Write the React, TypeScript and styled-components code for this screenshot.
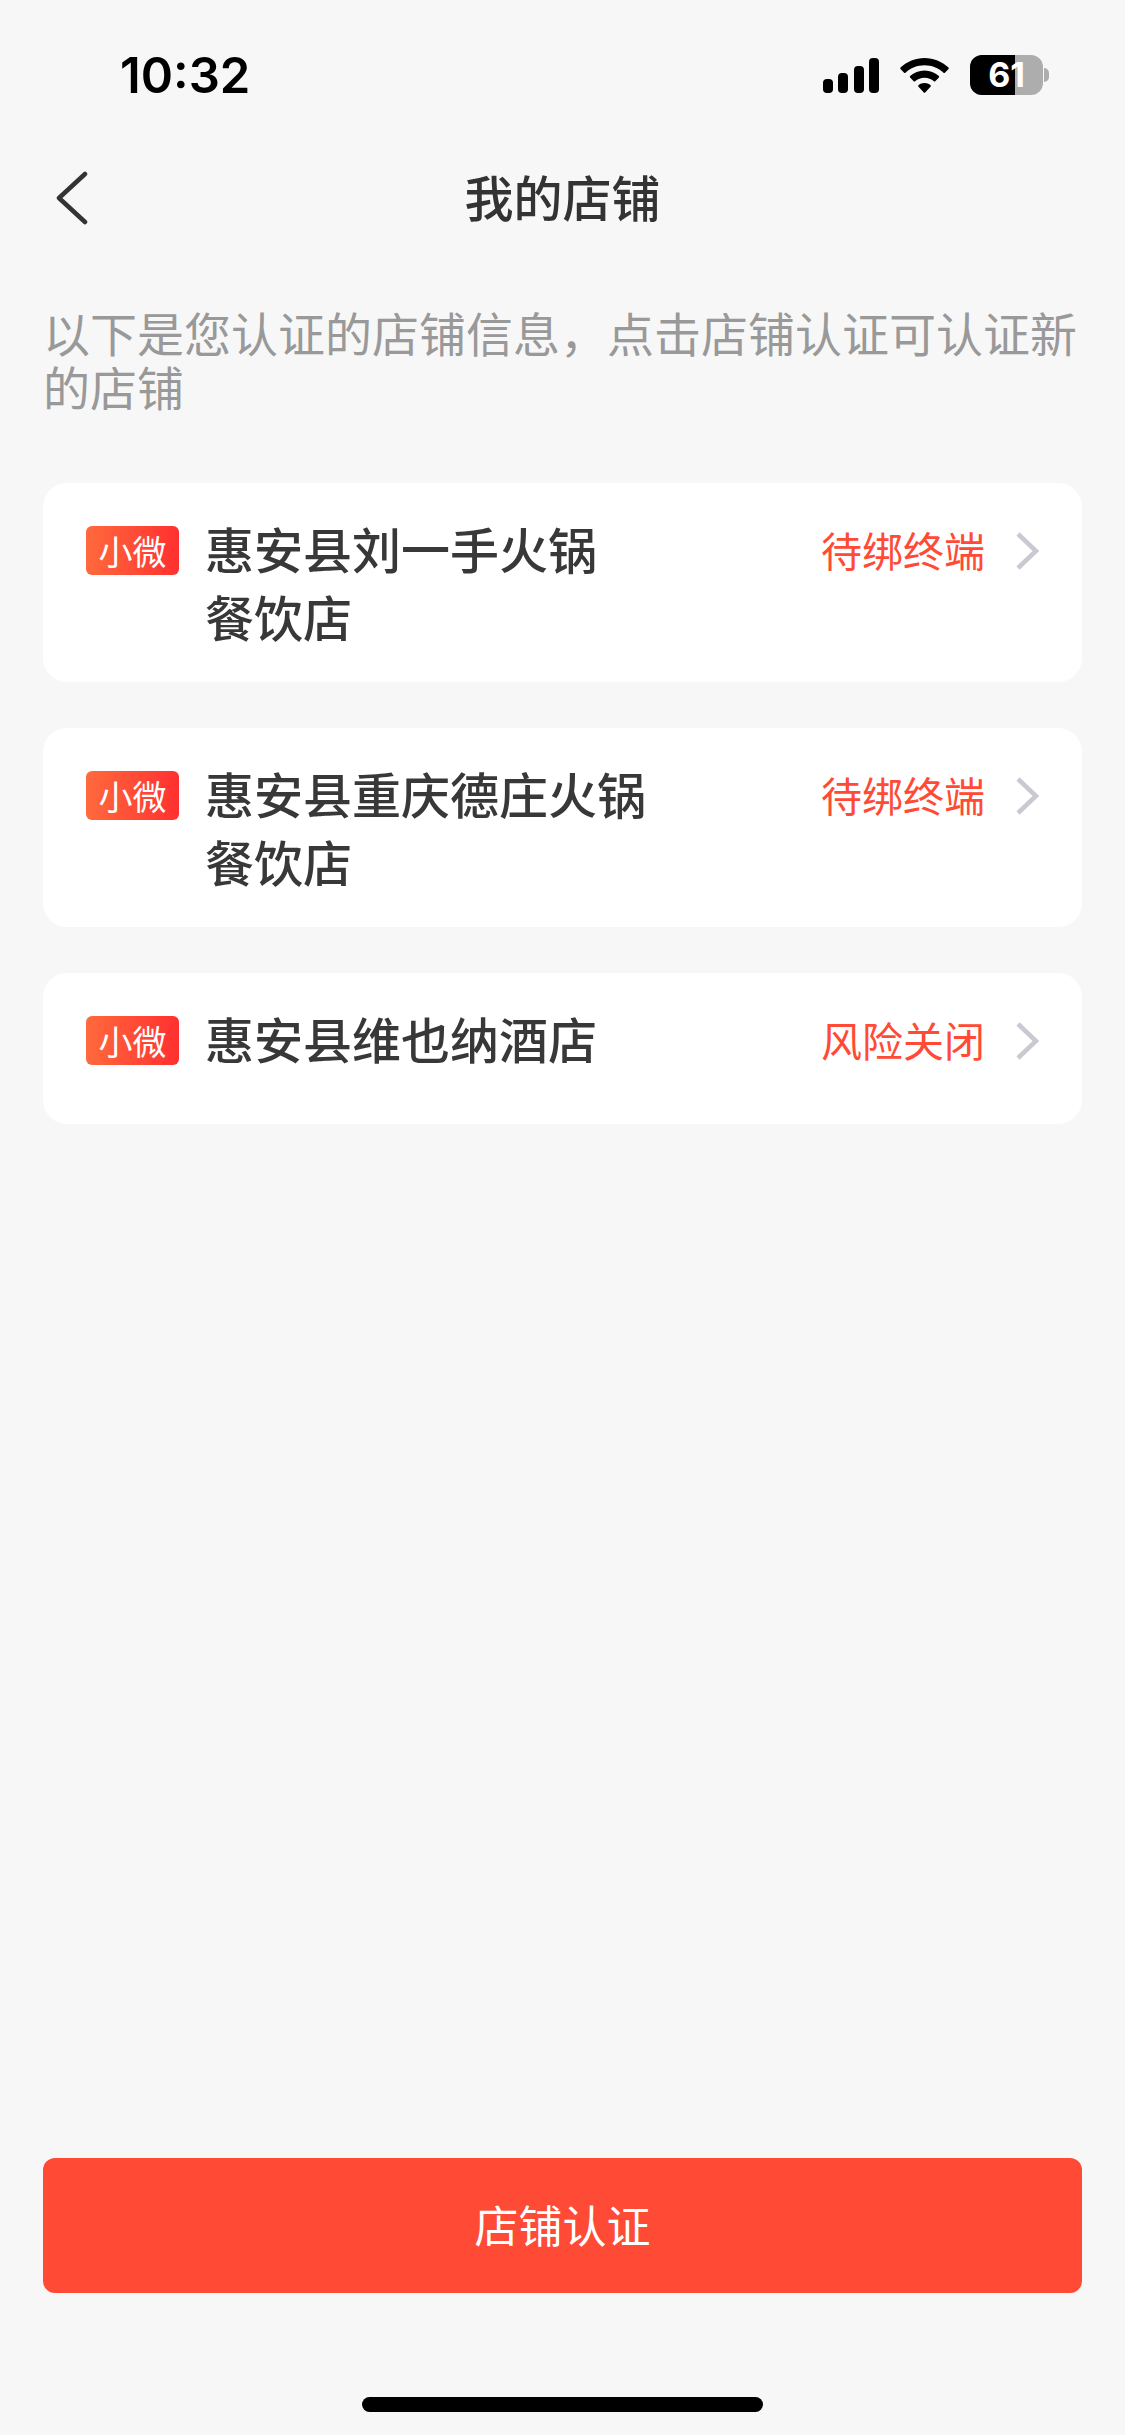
import * as React from 'react';
import styled, { createGlobalStyle } from 'styled-components';

const GlobalStyle = createGlobalStyle`
  html, body {
    margin: 0;
    padding: 0;
    background: #f7f7f7;
  }
  * {
    box-sizing: border-box;
  }
`;

const Page = styled.div`
  display: flex;
  flex-direction: column;
  height: 2435px;
  background: #f7f7f7;
  font-family: 'Noto Sans CJK SC', 'Noto Sans', sans-serif;
  color: #333;
`;

const StatusBar = styled.div`
  display: flex;
  align-items: center;
  justify-content: space-between;
  height: 150px;
  padding: 0 76px 0 120px;
`;

const Time = styled.span`
  font-family: Inter, sans-serif;
  font-size: 49px;
  font-weight: 600;
  color: #000;
`;

const StatusIcons = styled.div`
  display: flex;
  align-items: center;
  gap: 21px;
`;

const Battery = styled.div`
  position: relative;
  display: flex;
  align-items: center;
  justify-content: center;
  width: 73px;
  height: 40px;
  border-radius: 12px;
  background: #adadad;
  overflow: hidden;
`;

const BatteryFill = styled.div`
  position: absolute;
  left: 0;
  top: 0;
  bottom: 0;
  background: #000;
`;

const BatteryLabel = styled.span`
  position: relative;
  font-family: Inter, sans-serif;
  font-size: 34px;
  font-weight: 700;
  line-height: 1;
  color: #fff;
`;

const BatteryGroup = styled.div`
  display: flex;
  align-items: center;
  gap: 1px;
`;

const BatteryNub = styled.div`
  width: 5px;
  height: 14px;
  border-radius: 0 7px 7px 0;
  background: #adadad;
`;

const NavBar = styled.div`
  position: relative;
  display: flex;
  align-items: center;
  justify-content: center;
  height: 98px;
  padding-bottom: 8px;
`;

const BackButton = styled.button`
  position: absolute;
  left: 54px;
  top: 21px;
  display: flex;
  padding: 0;
  border: 0;
  background: none;
`;

const Title = styled.h1`
  margin: 0;
  font-size: 49px;
  font-weight: 500;
  color: #333;
`;

const Description = styled.p`
  margin: 57px 43px 0;
  font-size: 47px;
  line-height: 54px;
  color: #999;
`;

const ShopList = styled.div`
  display: flex;
  flex-direction: column;
  gap: 46px;
  margin: 70px 43px 0;
`;

const ShopCard = styled.div`
  display: flex;
  align-items: flex-start;
  min-height: 151px;
  padding: 31px 43px 32px 43px;
  border-radius: 24px;
  background: #fff;
`;

const TypeBadge = styled.span`
  flex: none;
  display: flex;
  align-items: center;
  justify-content: center;
  width: 93px;
  height: 49px;
  margin-top: 12px;
  border-radius: 6px;
  background: linear-gradient(90deg, #ff6a3d, #ff3030);
  font-size: 34px;
  font-weight: 400;
  color: #fff;
`;

const ShopName = styled.div`
  flex: none;
  margin-left: 26px;
  font-size: 49px;
  font-weight: 500;
  line-height: 68px;
  color: #383838;
`;

const NameLine = styled.div`
  white-space: nowrap;
`;

const ShopStatus = styled.div`
  display: flex;
  align-items: center;
  gap: 30px;
  margin-left: auto;
  margin-top: 7px;
  height: 60px;
`;

const StatusText = styled.span`
  margin-bottom: 4px;
  font-size: 41px;
  color: #ff4a35;
`;

const Footer = styled.div`
  display: flex;
  flex-direction: column;
  align-items: center;
  margin-top: auto;
  padding: 0 43px 23px;
`;

const CertifyButton = styled.button`
  width: 100%;
  height: 135px;
  padding: 0 0 4px;
  border: 0;
  border-radius: 12px;
  background: #ff4a35;
  font-family: inherit;
  font-size: 44px;
  color: #fff;
`;

const HomeIndicator = styled.div`
  width: 401px;
  height: 15px;
  margin-top: 104px;
  border-radius: 8px;
  background: #000;
`;

const shops = [
  { lines: ['惠安县刘一手火锅', '餐饮店'], status: '待绑终端' },
  { lines: ['惠安县重庆德庄火锅', '餐饮店'], status: '待绑终端' },
  { lines: ['惠安县维也纳酒店'], status: '风险关闭' },
];

const SignalIcon = () => (
  <svg width="56" height="35" viewBox="0 0 56 35">
    <rect x="0" y="21" width="10" height="14" rx="4" fill="#000" />
    <rect x="15" y="15" width="10" height="20" rx="4" fill="#000" />
    <rect x="31" y="8" width="10" height="27" rx="4" fill="#000" />
    <rect x="46" y="0" width="10" height="35" rx="4" fill="#000" />
  </svg>
);

const WifiIcon = () => (
  <svg width="49" height="35" viewBox="0 0 49 35">
    <path d="M24.5 0C33.6 0 42 3.6 48.5 9.6c.4.4.4 1 0 1.4l-3.6 3.7c-.4.4-1 .4-1.4 0C38.400 10 31.800 7.300 24.500 7.300S10.600 10 5.500 14.700c-.4.4-1 .4-1.400 0L.5 11c-.4-.4-.4-1 0-1.400C7 3.600 15.400 0 24.500 0z" fill="#000" />
    <path d="M24.500 12.500c5.500 0 10.500 2.100 14.400 5.600.4.4.4 1 0 1.400l-3.600 3.700c-.4.4-1 .4-1.400 0-2.500-2.200-5.800-3.500-9.400-3.500s-6.900 1.300-9.400 3.500c-.4.400-1 .4-1.400 0l-3.600-3.700c-.4-.4-.4-1 0-1.400 3.900-3.500 8.900-5.600 14.400-5.600z" fill="#000" />
    <path d="M24.500 25c2.300 0 4.500.8 6.100 2.200.4.4.4 1 .1 1.400l-5.500 5.900c-.4.4-1 .4-1.400 0l-5.500-5.900c-.3-.4-.3-1 .1-1.400 1.600-1.400 3.800-2.200 6.100-2.200z" fill="#000" />
  </svg>
);

const BackIcon = () => (
  <svg width="34" height="54" viewBox="0 0 34 54">
    <path d="M31 3 L5 27 L31 51" fill="none" stroke="#333" strokeWidth="4.500" strokeLinecap="round" strokeLinejoin="round" />
  </svg>
);

const ChevronIcon = () => (
  <svg width="24" height="40" viewBox="0 0 24 40">
    <path d="M3 3 L21 20 L3 37" fill="none" stroke="#c9c9d1" strokeWidth="4.500" />
  </svg>
);

export default function App() {
  return (
    <Page>
      <GlobalStyle />
      <StatusBar>
        <Time>10:32</Time>
        <StatusIcons>
          <SignalIcon />
          <WifiIcon />
          <BatteryGroup>
            <Battery>
              <BatteryFill style={{ width: '61%' }} />
              <BatteryLabel>61</BatteryLabel>
            </Battery>
            <BatteryNub />
          </BatteryGroup>
        </StatusIcons>
      </StatusBar>
      <NavBar>
        <BackButton>
          <BackIcon />
        </BackButton>
        <Title>我的店铺</Title>
      </NavBar>
      <Description>以下是您认证的店铺信息，点击店铺认证可认证新的店铺</Description>
      <ShopList>
        {shops.map((shop) => (
          <ShopCard key={shop.lines[0]}>
            <TypeBadge>小微</TypeBadge>
            <ShopName>
              {shop.lines.map((line) => (
                <NameLine key={line}>{line}</NameLine>
              ))}
            </ShopName>
            <ShopStatus>
              <StatusText>{shop.status}</StatusText>
              <ChevronIcon />
            </ShopStatus>
          </ShopCard>
        ))}
      </ShopList>
      <Footer>
        <CertifyButton>店铺认证</CertifyButton>
        <HomeIndicator />
      </Footer>
    </Page>
  );
}
